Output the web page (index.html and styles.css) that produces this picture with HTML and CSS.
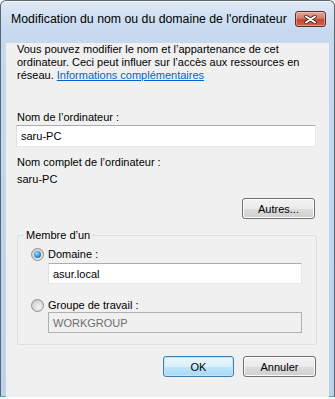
FILE: index.html
```html
<!DOCTYPE html>
<html lang="fr">
<head>
    <meta charset="UTF-8">
    <meta name="viewport" content="width=device-width, initial-scale=1.0">
    <title>Modification du nom ou du domaine de l'ordinateur</title>
    <link rel="stylesheet" href="styles.css">
</head>
<body>
    <div class="window">
        <!-- Title bar -->
        <div class="titlebar">
            <span class="title">Modification du nom ou du domaine de l'ordinateur</span>
            <button class="close-btn" aria-label="Fermer">
                <svg width="13" height="9" viewBox="0 0 13 9">
                    <path d="M2 1.5 L11 7.5 M11 1.5 L2 7.5" stroke="#4a2020" stroke-width="3.4" stroke-linecap="round"/>
                    <path d="M2 1.5 L11 7.5 M11 1.5 L2 7.5" stroke="#ffffff" stroke-width="2" stroke-linecap="round"/>
                </svg>
            </button>
        </div>

        <!-- Dialog body -->
        <div class="client">
            <p class="intro">Vous pouvez modifier le nom et l’appartenance de cet<br>ordinateur. Ceci peut influer sur l’accès aux ressources en<br>réseau. <a href="#">Informations complémentaires</a></p>

            <label class="field-label" for="computerName">Nom de l’ordinateur :</label>
            <input type="text" class="textbox" id="computerName" value="saru-PC">

            <div class="info-label">Nom complet de l’ordinateur :</div>
            <div class="info-value">saru-PC</div>

            <div class="row-right">
                <button class="btn">Autres...</button>
            </div>

            <fieldset class="group">
                <legend>Membre d’un</legend>
                <label class="radio-row"><span class="radio checked"></span>Domaine :</label>
                <input type="text" class="textbox sub" value="asur.local">
                <label class="radio-row second"><span class="radio"></span>Groupe de travail :</label>
                <input type="text" class="textbox sub" value="WORKGROUP" disabled>
            </fieldset>

            <div class="actions">
                <button class="btn default ok">OK</button>
                <button class="btn">Annuler</button>
            </div>
        </div>
    </div>
</body>
</html>
```

FILE: styles.css
```css
/* Page */
body {
    margin: 0;
    background-color: #ffffff;
    font-family: 'Liberation Sans', Arial, sans-serif;
    font-size: 11px;
    color: #000000;
}

/* Window frame */
.window {
    box-sizing: border-box;
    width: 335px;
    height: 397px;
    padding: 0 5px 6px 5px;
    border: 1px solid #5b6673;
    border-bottom-color: #2bb6d8;
    border-radius: 6px 6px 0 0;
    background: linear-gradient(#dde8f5, #c6d9ee 30px, #bcd2eb);
    box-shadow: inset 0 1px 0 #f4f8fc, 0 1px 0 #000000;
}

/* Title bar */
.titlebar {
    box-sizing: border-box;
    height: 30px;
    padding: 6px 3px 0 5px;
    display: flex;
    align-items: center;
}

.title {
    font-family: 'Liberation Sans', Arial, sans-serif;
    font-size: 12.3px;
    color: #000000;
    white-space: nowrap;
}

.close-btn {
    margin-left: auto;
    width: 31px;
    height: 16px;
    padding: 0;
    border: 1px solid #5a2d2a;
    border-radius: 3px;
    background: linear-gradient(#e8a492, #d47a66 45%, #c2462f 55%, #d0664b);
    box-shadow: inset 0 0 0 1px rgba(255, 255, 255, 0.35);
    display: flex;
    align-items: center;
    justify-content: center;
}

/* Client area */
.client {
    box-sizing: border-box;
    height: 359px;
    padding: 0 13px 0 10px;
    background-color: #f0f0f0;
}

.intro {
    margin: 12px 0 0 1px;
    line-height: 13px;
}

.intro a {
    color: #0066cc;
    text-decoration: underline;
}

.field-label {
    display: block;
    margin: 29px 0 0 1px;
    line-height: 13px;
}

/* Text boxes */
.textbox {
    display: block;
    box-sizing: border-box;
    width: 300px;
    height: 22px;
    margin: 1px 0 0 0;
    padding: 0 4px;
    border: 1px solid #e3e9ef;
    border-top-color: #abadb3;
    border-left-color: #dbdfe6;
    background-color: #ffffff;
    font-family: 'Liberation Sans', Arial, sans-serif;
    font-size: 11px;
    color: #000000;
    outline: none;
}

.textbox.sub {
    width: 254px;
    height: 21px;
    margin: 2px 0 0 17px;
}

.textbox:disabled {
    background-color: #f0f0f0;
    border-color: #adb2b5;
    color: #6d6d6d;
}

.info-label {
    margin: 9px 0 0 1px;
    line-height: 13px;
}

.info-value {
    margin: 4px 0 0 1px;
    line-height: 13px;
}

/* Buttons */
.btn {
    box-sizing: border-box;
    width: 73px;
    height: 21px;
    padding: 0;
    border: 1px solid #707070;
    border-radius: 3px;
    background: linear-gradient(#f2f2f2, #ebebeb 50%, #dddddd 50%, #cfcfcf);
    box-shadow: inset 0 0 0 1px #fcfcfc;
    font-family: 'Liberation Sans', Arial, sans-serif;
    font-size: 11px;
    color: #000000;
}

.btn.default {
    border-color: #3c7fb1;
    background: linear-gradient(#eaf6fd, #d9f0fc 50%, #bee6fd 50%, #a7d9f5);
    box-shadow: inset 0 0 0 1px #c4e5f6;
}

.btn.ok {
    width: 71px;
}

.row-right {
    display: flex;
    justify-content: flex-end;
    margin: 12px 1px 0 0;
}

/* Group box */
.group {
    width: 300px;
    box-sizing: border-box;
    margin: 10px 0 0 1px;
    padding: 6px 10px 11px 13px;
    border: 1px solid #d5dfe5;
    border-radius: 3px;
}

.group legend {
    margin-left: -7px;
    padding: 0 2px;
    line-height: 13px;
}

.radio-row {
    display: flex;
    align-items: center;
    gap: 4px;
    height: 13px;
    line-height: 13px;
}

.radio-row.second {
    margin-top: 15px;
}

.radio-row.second + .textbox {
    margin-top: 0;
}

/* Radio buttons */
.radio {
    box-sizing: border-box;
    width: 13px;
    height: 13px;
    border: 1px solid #8e8f8f;
    border-radius: 50%;
    background: radial-gradient(circle at 60% 65%, #f4f4f4, #d6d6d6 60%, #c2c2c2);
    display: flex;
    align-items: center;
    justify-content: center;
}

.radio.checked::after {
    content: "";
    width: 7px;
    height: 7px;
    border-radius: 50%;
    background: radial-gradient(circle at 40% 35%, #a2dcff, #2f8fd0 55%, #1b4f7c);
}

/* Bottom buttons */
.actions {
    display: flex;
    justify-content: flex-end;
    gap: 9px;
    margin-top: 11px;
}
```
